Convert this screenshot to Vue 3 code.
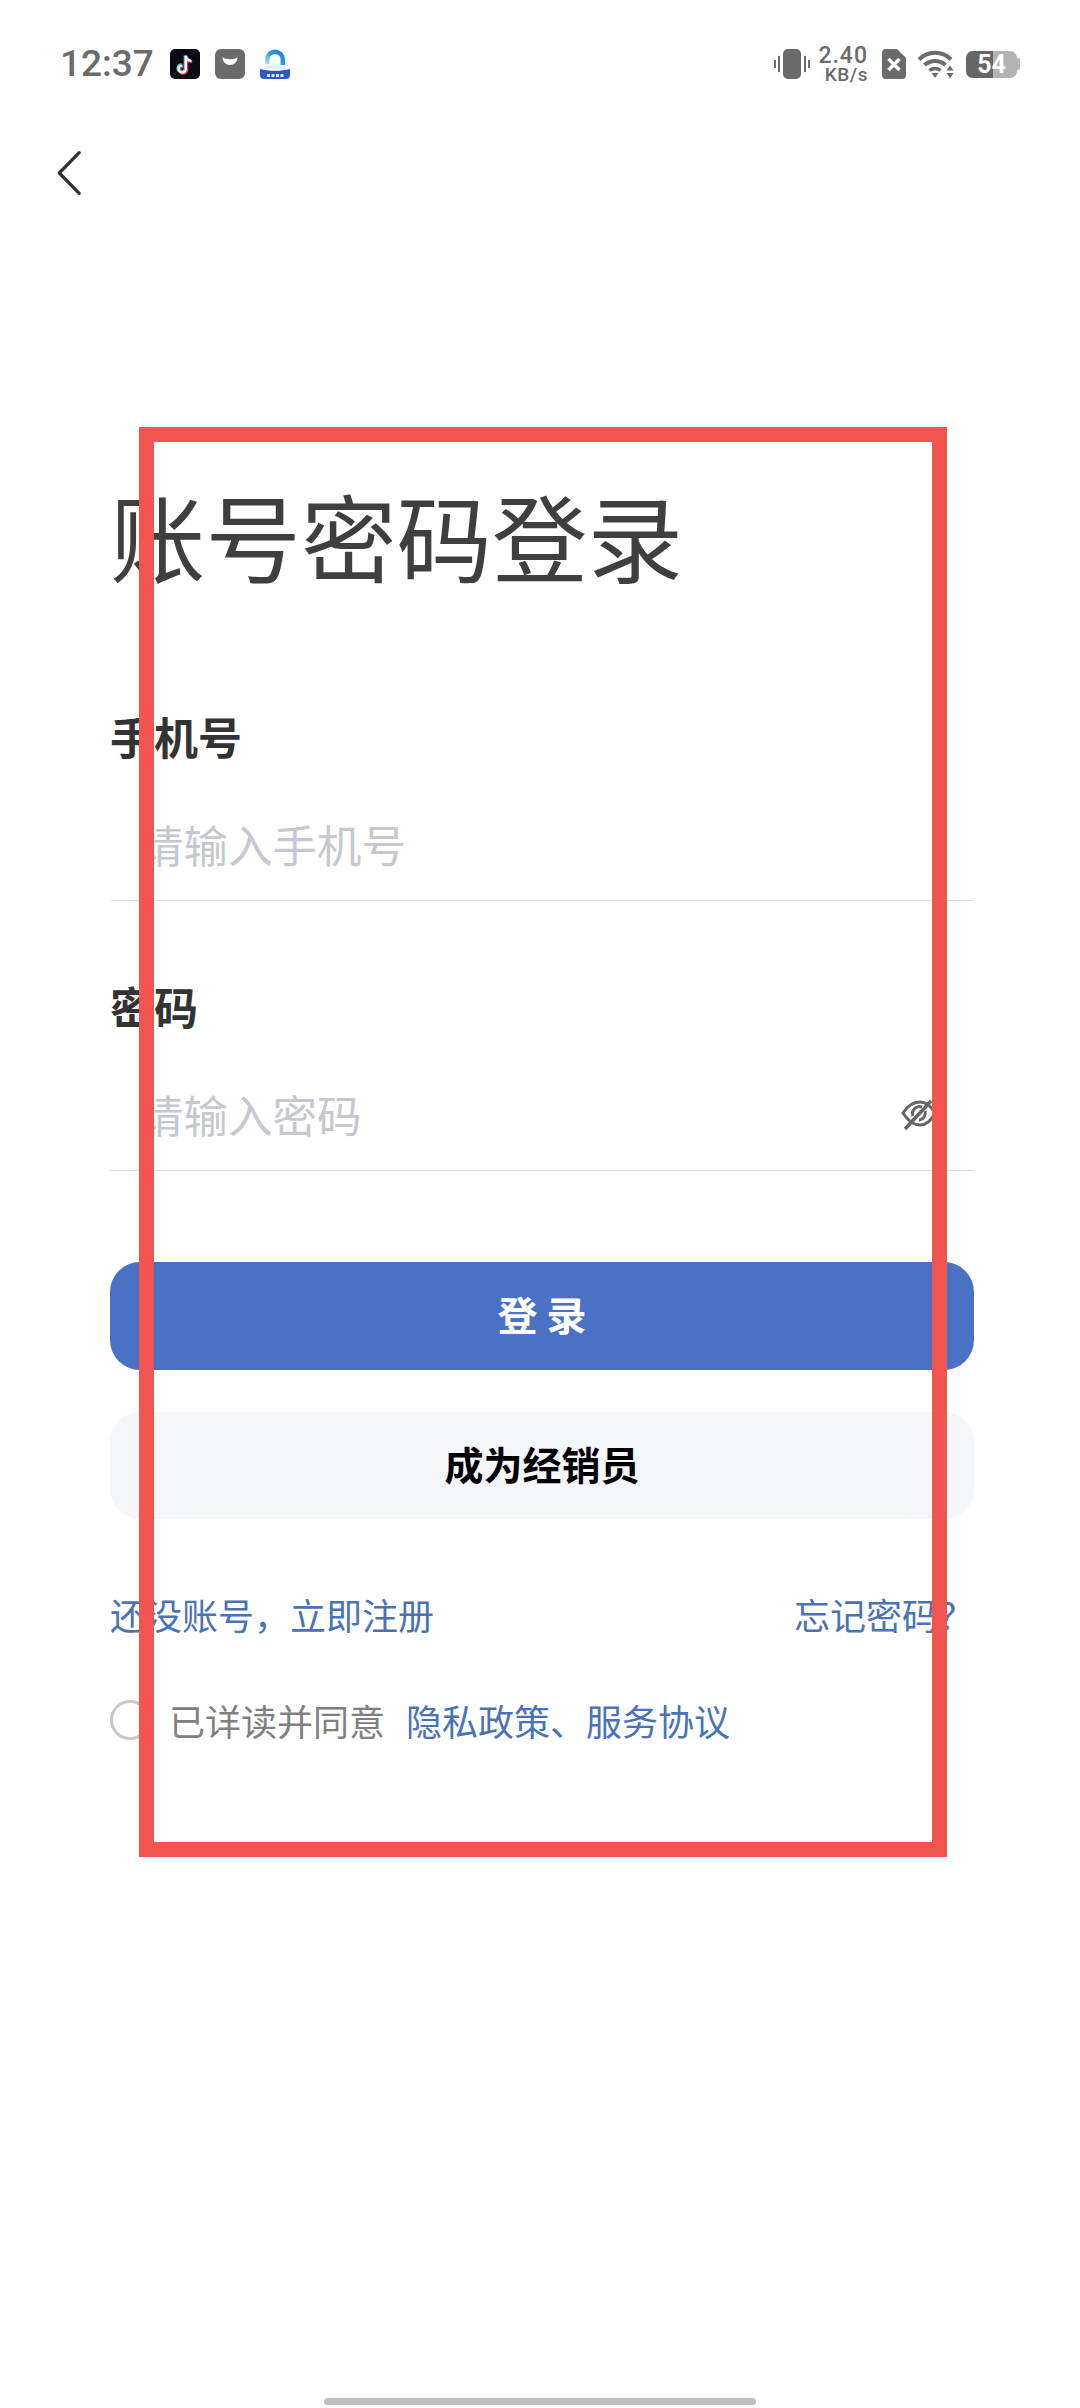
<script setup>
const title = '账号密码登录'
</script>

<template>
  <div class="page">
    <header class="status">
      <div class="status-left">
        <span class="time">12:37</span>
        <svg class="app" viewBox="0 0 30 30">
          <rect width="30" height="30" rx="5" fill="#0b0b14"/>
          <path d="M16 7v13a3.6 3.6 0 1 1-3.6-3.6M16 7c.4 3 2.400 4.800 5.400 5" fill="none" stroke="#ff2d55" stroke-width="3" transform="translate(.8 .8)"/>
          <path d="M16 7v13a3.600 3.600 0 1 1-3.600-3.600M16 7c.4 3 2.400 4.800 5.400 5" fill="none" stroke="#5fe3e3" stroke-width="3" transform="translate(-.8 -.6)"/>
          <path d="M16 7v13a3.600 3.600 0 1 1-3.600-3.600M16 7c.4 3 2.400 4.800 5.400 5" fill="none" stroke="#fff" stroke-width="2"/>
        </svg>
        <svg class="app" viewBox="0 0 30 30">
          <rect width="30" height="30" rx="6" fill="#6b6b6b"/>
          <path d="M7.500 8C9.500 11 20.500 11 22.500 8 22.500 18.500 7.500 18.500 7.500 8z" fill="#fff"/>
        </svg>
        <svg class="app" viewBox="0 0 30 30">
          <defs>
            <linearGradient id="arch" x1="0" y1="1" x2="1" y2="0">
              <stop offset="0" stop-color="#bfe0fa"/>
              <stop offset=".5" stop-color="#2b9cf2"/>
              <stop offset="1" stop-color="#1a82e8"/>
            </linearGradient>
            <linearGradient id="mist" x1="0" y1="0" x2="0" y2="1">
              <stop offset="0" stop-color="#ffffff"/>
              <stop offset="1" stop-color="#dbecfa"/>
            </linearGradient>
          </defs>
          <path d="M3 20c2-3 4-4 4-8h16c0 4 2 5 4 8z" fill="url(#mist)"/>
          <path d="M7.200 15V10.500a7.800 7.800 0 0 1 15.600 0V16" fill="none" stroke="url(#arch)" stroke-width="4.400"/>
          <path d="M0 20c9 2.400 21 2.400 30 0v6a4 4 0 0 1-4 4H4a4 4 0 0 1-4-4z" fill="#2f56c6"/>
          <path d="M7 25h3v3H7zM11.500 25h3v3h-3zM16 25h3v3h-3zM20.500 25h3v3h-3z" fill="#dfe6f8"/>
        </svg>
      </div>
      <div class="status-right">
        <svg class="vib" viewBox="0 0 36 30">
          <rect x="9" y="0" width="18" height="30" rx="5" fill="#6b6b6b"/>
          <path d="M5 7v16M1 11v8M31 7v16M35 11v8" stroke="#6b6b6b" stroke-width="2" fill="none"/>
        </svg>
        <div class="speed"><span>2.40</span><span>KB/s</span></div>
        <svg class="sim" viewBox="0 0 24 30">
          <path d="M4 0h11l9 9v17a4 4 0 0 1-4 4H4a4 4 0 0 1-4-4V4a4 4 0 0 1 4-4z" fill="#6b6b6b"/>
          <path d="M6.500 10l11 11M17.500 10l-11 11" stroke="#fff" stroke-width="3.400" fill="none"/>
        </svg>
        <svg class="wifi" viewBox="0 0 38 30">
          <path d="M2 10.500c9-9 23-9 32 0" fill="none" stroke="#6b6b6b" stroke-width="4"/>
          <path d="M7.500 16c6-5.500 15-5.500 21 0" fill="none" stroke="#6b6b6b" stroke-width="4"/>
          <path d="M12.500 21.500c3-2.600 8-2.600 11 0" fill="none" stroke="#6b6b6b" stroke-width="3.600"/>
          <path d="M14.500 24h7l-3.500 5z" fill="#6b6b6b"/>
          <path d="M33 16.500l3.500 5h-7zM33 29.500l3.500-5.500h-7z" fill="#6b6b6b"/>
        </svg>
        <div class="battery">
          <div class="batt-body">
            <div class="batt-fill"></div>
            <span class="batt-num">54</span>
          </div>
          <div class="batt-cap"></div>
        </div>
      </div>
    </header>

    <div class="nav">
      <svg class="back" viewBox="0 0 26 48">
        <path d="M24 2L2.500 24 24 46" fill="none" stroke="#333" stroke-width="3.500" stroke-linecap="round" stroke-linejoin="round"/>
      </svg>
    </div>

    <main class="form">
      <h1 class="title">{{ title }}</h1>

      <label class="label first">手机号</label>
      <div class="field"><span class="placeholder">请输入手机号</span></div>

      <label class="label second">密码</label>
      <div class="field">
        <span class="placeholder">请输入密码</span>
        <svg class="eye" viewBox="0 0 36 34">
          <path d="M2 16c5-8 10-11 17-11 6 0 11 4 15 11-4 8-9 12-15 12-7 0-12-4-17-12z" fill="none" stroke="#666" stroke-width="3"/>
          <path d="M12 19a7 7 0 0 1 9-9M24 14a7 7 0 0 1-6 9" fill="none" stroke="#666" stroke-width="3"/>
          <path d="M4 32L30 4" stroke="#666" stroke-width="3.500" fill="none"/>
        </svg>
      </div>

      <button class="btn primary">登 录</button>
      <button class="btn secondary">成为经销员</button>

      <div class="links">
        <span>还没账号，立即注册</span>
        <span>忘记密码？</span>
      </div>

      <div class="agree">
        <span class="radio"></span>
        <span class="agree-text">已详读并同意</span>
        <span class="agree-link">隐私政策、服务协议</span>
      </div>
    </main>

    <div class="highlight"></div>
    <div class="home-bar"></div>
  </div>
</template>

<style>
html, body { margin: 0; background: #fff; }
</style>

<style scoped>
.page {
  position: relative;
  width: 1080px;
  height: 2408px;
  overflow: hidden;
  background: #fff;
  font-family: "Noto Sans CJK SC", "Noto Sans", sans-serif;
}
.status {
  display: flex;
  justify-content: space-between;
  align-items: center;
  height: 30px;
  padding: 49px 60px 0 60px;
}
.status-left { display: flex; align-items: center; }
.status-right { display: flex; align-items: center; }
.time {
  font-family: Roboto, sans-serif;
  font-size: 37px;
  font-weight: 500;
  color: #6b6b6b;
  width: 110px;
  line-height: 30px;
}
.app { width: 30px; height: 30px; margin-right: 15px; }
.vib { width: 36px; height: 30px; margin-right: 12px; }
.speed {
  display: flex;
  flex-direction: column;
  align-items: flex-end;
  font-family: Roboto, sans-serif;
  font-weight: 500;
  color: #6b6b6b;
  margin-right: 14px;
  width: 46px;
  white-space: nowrap;
}
.speed span:first-child { font-size: 23px; line-height: 20px; letter-spacing: 1px; }
.speed span:last-child { font-size: 19px; line-height: 17px; letter-spacing: .5px; }
.sim { width: 24px; height: 30px; margin-right: 11px; }
.wifi { width: 38px; height: 30px; margin-right: 11px; }
.battery { display: flex; align-items: center; }
.batt-body {
  position: relative;
  width: 51px;
  height: 27px;
  border-radius: 7px;
  background: #b3b3b3;
  overflow: hidden;
}
.batt-fill { width: 27px; height: 100%; background: #666; }
.batt-num {
  position: absolute;
  inset: 0;
  text-align: center;
  font-family: Roboto, sans-serif;
  font-size: 25px;
  font-weight: 700;
  line-height: 27px;
  color: #fff;
}
.batt-cap { width: 3px; height: 12px; background: #b3b3b3; border-radius: 0 2px 2px 0; }
.nav { padding: 71px 0 0 57px; height: 46px; }
.back { display: block; width: 24px; height: 46px; }
.form {
  margin: 0 106px 0 110px;
  padding-top: 291px;
}
.title {
  margin: 0;
  font-size: 95.5px;
  font-weight: 400;
  line-height: 96px;
  color: #3f3f3f;
}
.label {
  display: block;
  font-size: 44px;
  font-weight: 700;
  line-height: 50px;
  color: #333;
}
.label.first { margin-top: 128px; }
.label.second { margin-top: 80px; }
.field {
  display: flex;
  align-items: center;
  justify-content: space-between;
  height: 140px;
  box-sizing: border-box;
  padding: 26px 0 0 29px;
  border-bottom: 1px solid #dcdfe4;
}
.placeholder { font-size: 44.5px; color: #c5c8d0; }
.eye { width: 36px; height: 34px; margin-right: 37px; }
.btn {
  display: block;
  width: 100%;
  border: 0;
  border-radius: 30px;
  font-family: inherit;
  font-weight: 700;
  padding: 0 0 5px;
}
.primary {
  height: 108px;
  margin-top: 91px;
  background: #4a72c4;
  color: #fff;
  font-size: 40px;
}
.secondary {
  height: 107px;
  margin-top: 42px;
  background: #f5f6fa;
  color: #000;
  font-size: 39px;
}
.links {
  display: flex;
  justify-content: space-between;
  margin-top: 70px;
  font-size: 36px;
  line-height: 50px;
  color: #4a72b4;
}
.agree {
  display: flex;
  align-items: center;
  margin-top: 56px;
  font-size: 36px;
  line-height: 50px;
}
.radio {
  width: 40px;
  height: 40px;
  box-sizing: border-box;
  border: 3px solid #c8c8c8;
  border-radius: 50%;
  margin-right: 19px;
}
.agree-text { color: #808080; margin-right: 21px; }
.agree-link { color: #4a72b4; }
.highlight {
  position: absolute;
  left: 139px;
  top: 427px;
  width: 808px;
  height: 1430px;
  box-sizing: border-box;
  border: 15px solid #f25450;
}
.home-bar {
  position: absolute;
  left: 324px;
  top: 2398px;
  width: 432px;
  height: 7px;
  border-radius: 3.500px;
  background: #bfbfbf;
}
</style>
